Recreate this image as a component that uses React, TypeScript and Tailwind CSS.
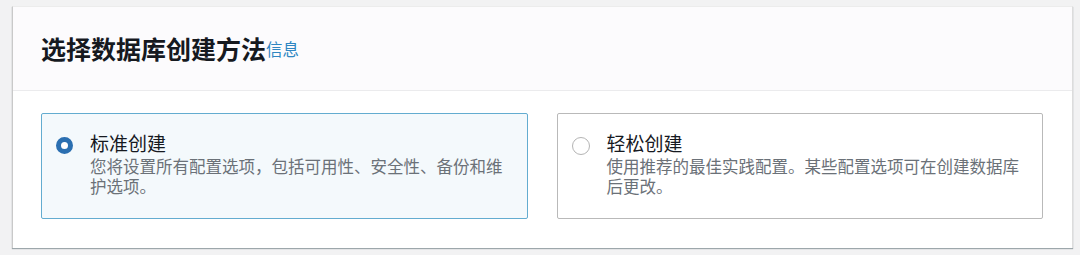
import { useState } from "react";

const options = [
  {
    value: "standard",
    label: "标准创建",
    desc: "您将设置所有配置选项，包括可用性、安全性、备份和维护选项。",
  },
  {
    value: "easy",
    label: "轻松创建",
    desc: "使用推荐的最佳实践配置。某些配置选项可在创建数据库后更改。",
  },
];

export default function App() {
  const [method, setMethod] = useState("standard");

  return (
    <div
      className="w-[1080px] h-[255px] bg-[#f2f2f3] pt-[6px] pl-[12px] pr-[7px] overflow-hidden"
      style={{ fontFamily: '"Noto Sans CJK SC", "Noto Sans", sans-serif' }}
    >
      <div className="bg-white border-l border-[#c9c9c9] border-r border-r-[#dcdcdc] border-t border-t-[#ececec] shadow-[0_1px_1px_0_rgba(0,28,36,0.35)]">
        <div className="h-[84px] bg-[#fcfbfd] border-b border-[#ebebed] flex items-center pl-[28px]">
          <h2 className="text-[25px] font-bold text-[#16191f] leading-none tracking-[0px]">
            选择数据库创建方法
          </h2>
          <a className="text-[16.5px] text-[#2f86c2] leading-none mt-[2px]">信息</a>
        </div>
        <div className="grid grid-cols-2 gap-[29px] pl-[28px] pr-[29px] pt-[22px] pb-[29px]">
          {options.map((opt) => {
            const selected = method === opt.value;
            return (
              <div
                key={opt.value}
                onClick={() => setMethod(opt.value)}
                className={`h-[106px] rounded-[2px] border flex gap-[17px] pl-[14px] pr-[14px] pt-[16px] cursor-pointer ${
                  selected
                    ? "border-[#63acd0] bg-[#f4f9fc]"
                    : "border-[#b9b9b9] bg-white"
                }`}
              >
                <div className="pt-[7px] shrink-0">
                  {selected ? (
                    <div className="w-[17px] h-[17px] rounded-full border-[5px] border-[#2b6fb1] bg-white" />
                  ) : (
                    <div className="w-[18px] h-[18px] rounded-full border-[1.5px] border-[#b4b4b4] bg-white" />
                  )}
                </div>
                <div className="flex flex-col">
                  <div className="text-[19px] leading-[26px] text-[#16191f]">{opt.label}</div>
                  <div className="text-[16.5px] leading-[20px] text-[#6b7178]">{opt.desc}</div>
                </div>
              </div>
            );
          })}
        </div>
      </div>
    </div>
  );
}
